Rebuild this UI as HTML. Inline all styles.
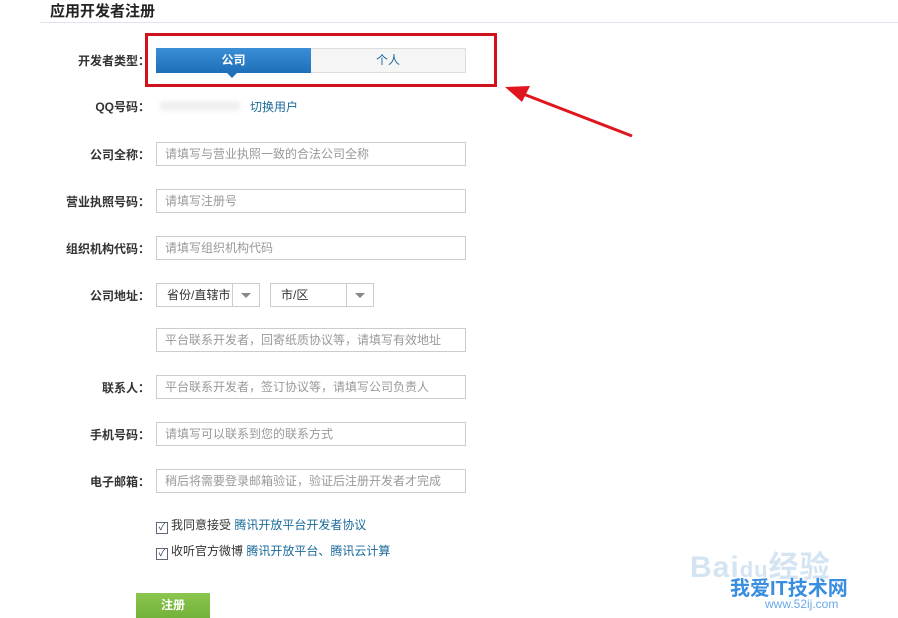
<!DOCTYPE html>
<html><head><meta charset="utf-8"><style>
body{margin:0;width:898px;height:618px;background:#fff;position:relative;overflow:hidden;font-family:"Liberation Sans","Noto Sans CJK SC",sans-serif;font-size:12px;color:#333}
.a{position:absolute}
.lbl{position:absolute;right:748px;font-weight:bold;font-size:12px;color:#333;white-space:nowrap}
.inp{position:absolute;left:156px;width:308px;height:22px;border:1px solid #ccc;color:#999;line-height:22px;padding-left:8px;box-sizing:border-box;width:310px;height:24px}
.sel{position:absolute;top:283px;height:24px;border:1px solid #ccc;box-sizing:border-box;line-height:22px;color:#333}
.sel .dd{position:absolute;right:0;top:0;width:26px;height:22px;border-left:1px solid #ccc}
.sel .dd:after{content:"";position:absolute;left:8px;top:9px;border:5px solid transparent;border-top:5px solid #888}
.lk{color:#1a6a9a}
.cb{display:inline-block;width:10px;height:10px;border:1px solid #667;vertical-align:-1px;margin-right:3px;font-size:10px;line-height:10px;text-align:center;color:#246}
</style></head><body>
<div class="a" style="left:50px;top:0px;font-size:15px;font-weight:bold;color:#222">应用开发者注册</div>
<div class="a" style="left:40px;top:22px;width:858px;height:1px;background:#dde6ee"></div>

<div class="a" style="left:145px;top:33px;width:346px;height:48px;border:3px solid #d0121b"></div>
<div class="a" style="left:156px;top:48px;width:155px;height:25px;background:linear-gradient(#3a8fd6,#1e6fb8);color:#fff;font-weight:bold;text-align:center;line-height:25px;font-size:12px">公司</div>
<div class="a" style="left:227px;top:73px;border:5px solid transparent;border-top:5px solid #1e6fb8"></div>
<div class="a" style="left:311px;top:48px;width:154px;height:23px;border:1px solid #ddd;border-left:none;background:#f5f5f5;color:#1a6a9a;text-align:center;line-height:23px">个人</div>
<div class="lbl" style="top:52px">开发者类型：</div>

<svg class="a" style="left:500px;top:80px" width="140" height="62"><line x1="132" y1="56" x2="18" y2="12" stroke="#e0161e" stroke-width="3"/><polygon points="5,7 30,6 22,22" fill="#e0161e"/></svg>

<div class="lbl" style="top:98px">QQ号码：</div>
<div class="a" style="left:160px;top:101px;width:80px;height:10px;background:#f0f0f0;filter:blur(2px)"></div>
<div class="a lk" style="left:250px;top:98px">切换用户</div>

<div class="lbl" style="top:146px">公司全称：</div><div class="inp" style="top:142px">请填写与营业执照一致的合法公司全称</div>
<div class="lbl" style="top:193px">营业执照号码：</div><div class="inp" style="top:189px">请填写注册号</div>
<div class="lbl" style="top:240px">组织机构代码：</div><div class="inp" style="top:236px">请填写组织机构代码</div>
<div class="lbl" style="top:287px">公司地址：</div>
<div class="sel" style="left:156px;width:104px;padding-left:10px">省份/直辖市<span class="dd"></span></div>
<div class="sel" style="left:270px;width:104px;padding-left:10px">市/区<span class="dd"></span></div>
<div class="inp" style="top:328px">平台联系开发者，回寄纸质协议等，请填写有效地址</div>
<div class="lbl" style="top:379px">联系人：</div><div class="inp" style="top:375px">平台联系开发者，签订协议等，请填写公司负责人</div>
<div class="lbl" style="top:426px">手机号码：</div><div class="inp" style="top:422px">请填写可以联系到您的联系方式</div>
<div class="lbl" style="top:473px">电子邮箱：</div><div class="inp" style="top:469px">稍后将需要登录邮箱验证，验证后注册开发者才完成</div>

<div class="a" style="left:156px;top:516px"><span class="cb">✓</span>我同意接受 <span class="lk">腾讯开放平台开发者协议</span></div>
<div class="a" style="left:156px;top:542px"><span class="cb">✓</span>收听官方微博 <span class="lk">腾讯开放平台、腾讯云计算</span></div>
<div class="a" style="left:136px;top:593px;width:74px;height:25px;background:linear-gradient(#8cc64f,#72b23a);color:#fff;font-weight:bold;text-align:center;line-height:25px">注册</div>

<div class="a" style="left:690px;top:542px;font-size:30px;color:#d4e4f2;font-weight:bold;letter-spacing:1px">Bai<span style="font-size:22px">du</span>经验</div>
<div class="a" style="left:730px;top:572px;font-size:20px;color:#3a8ee0;font-weight:bold">我爱IT技术网</div>
<div class="a" style="left:765px;top:597px;font-size:12px;color:#6aa8e8">www.52ij.com</div>
</body></html>
